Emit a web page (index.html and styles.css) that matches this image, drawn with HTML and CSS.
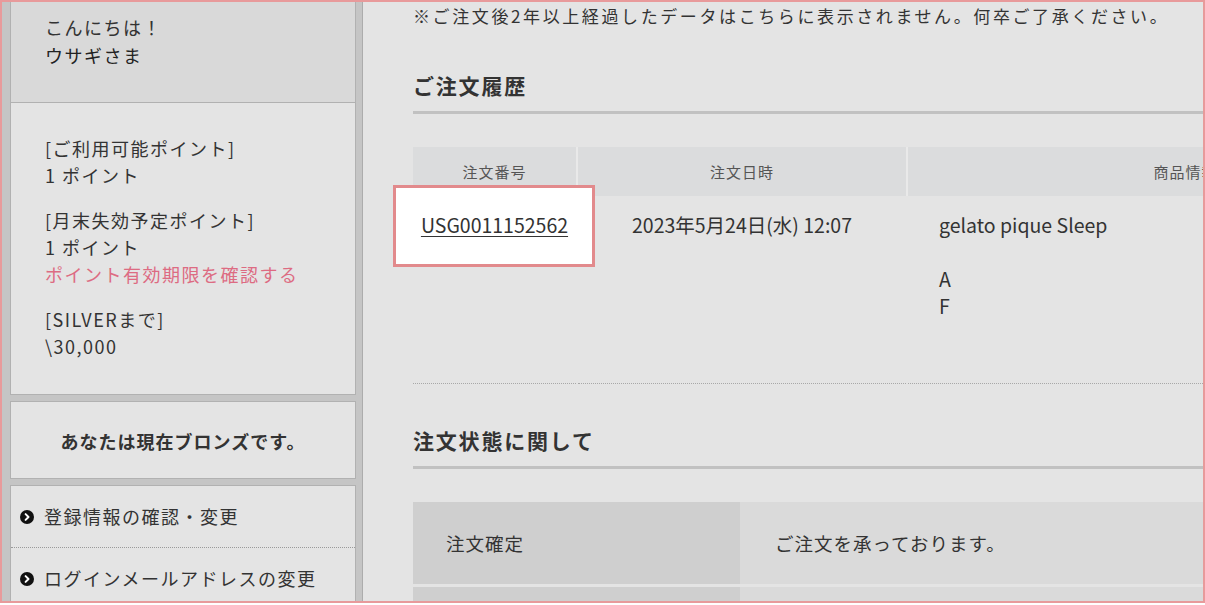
FILE: index.html
```html
<!DOCTYPE html>
<html lang="ja">
<head>
<meta charset="utf-8">
<title>ご注文履歴</title>
<link rel="stylesheet" href="styles.css">
</head>
<body>
<div class="frame">
  <aside class="sidebar">
    <div class="card user">
      <div class="greeting">
        <p>こんにちは！</p>
        <p class="name">ウサギさま</p>
      </div>
      <div class="points">
        <div class="group">
          <p>[ご利用可能ポイント]</p>
          <p>1 ポイント</p>
        </div>
        <div class="group">
          <p>[月末失効予定ポイント]</p>
          <p>1 ポイント</p>
          <p><a class="pink-link" href="#">ポイント有効期限を確認する</a></p>
        </div>
        <div class="group">
          <p>[SILVERまで]</p>
          <p>\30,000</p>
        </div>
      </div>
    </div>
    <div class="card rank">あなたは現在ブロンズです。</div>
    <div class="card menu">
      <ul>
        <li><span class="bullet"><svg viewBox="0 0 14 14" width="14" height="14"><circle cx="7" cy="7" r="7" fill="#111"/><path d="M5.6 4.1 L8.5 7 L5.6 9.9" fill="none" stroke="#fff" stroke-width="2" stroke-linecap="round" stroke-linejoin="round"/></svg></span>登録情報の確認・変更</li>
        <li><span class="bullet"><svg viewBox="0 0 14 14" width="14" height="14"><circle cx="7" cy="7" r="7" fill="#111"/><path d="M5.6 4.1 L8.5 7 L5.6 9.9" fill="none" stroke="#fff" stroke-width="2" stroke-linecap="round" stroke-linejoin="round"/></svg></span>ログインメールアドレスの変更</li>
      </ul>
    </div>
  </aside>
  <main class="main">
    <div class="main-inner">
      <p class="notice">※ご注文後2年以上経過したデータはこちらに表示されません。何卒ご了承ください。</p>
      <h2 class="heading">ご注文履歴</h2>
      <table class="orders">
        <thead>
          <tr>
            <th class="c-no">注文番号</th>
            <th class="c-date">注文日時</th>
            <th class="c-item">商品情報</th>
          </tr>
        </thead>
        <tbody>
          <tr>
            <td class="c-no"><span class="mark"></span><a class="order-link" href="#">USG0011152562</a></td>
            <td class="c-date">2023年5月24日(水) 12:07</td>
            <td class="c-item">gelato pique Sleep<br><br>A<br>F</td>
          </tr>
        </tbody>
      </table>
      <h2 class="heading">注文状態に関して</h2>
      <table class="status">
        <tbody>
          <tr>
            <th>注文確定</th>
            <td>ご注文を承っております。</td>
          </tr>
          <tr>
            <th>&nbsp;</th>
            <td>&nbsp;</td>
          </tr>
        </tbody>
      </table>
    </div>
  </main>
</div>
</body>
</html>
```

FILE: styles.css
```css
* { box-sizing: border-box; }
html, body { margin: 0; padding: 0; background: #fff; }
body {
  font-family: "Noto Sans CJK JP", "Noto Sans", sans-serif;
  color: #333;
  font-size: 18px;
}
p { margin: 0; }

.frame {
  width: 1205px;
  height: 603px;
  border: 2px solid #e89a9b;
  display: flex;
  overflow: hidden;
  background: #e4e4e4;
}

/* sidebar */
.sidebar {
  flex: 0 0 361px;
  background: #c5c5c5;
  padding: 0 6px 0 8px;
  border-right: 1px solid #acacac;
}
.card {
  border: 1px solid #b1b1b1;
  background: #e4e4e4;
  margin-bottom: 6px;
  letter-spacing: 1.5px;
}
.user { border-top: 0; }
.greeting {
  height: 101px;
  background: #d9d9d9;
  border-bottom: 1px solid #b1b1b1;
  padding: 11px 0 0 34px;
  line-height: 28px;
}
.greeting .name { color: #222; }
.points {
  height: 291px;
  padding: 32px 0 0 34px;
  line-height: 27px;
}
.points .group + .group { margin-top: 18px; }
.pink-link { color: #dd6b82; text-decoration: none; }

.rank {
  height: 78px;
  display: flex;
  align-items: center;
  justify-content: center;
  font-weight: bold;
  font-size: 18px;
  letter-spacing: 1px;
  padding-top: 2px;
}

.menu ul { list-style: none; margin: 0; padding: 0; }
.menu li {
  display: flex;
  align-items: center;
  padding: 17px 0 17px 9px;
  line-height: 27px;
}
.menu li + li { border-top: 1px dotted #9a9a9a; }
.bullet { display: flex; margin-right: 10px; }

/* main */
.main {
  flex: 1;
  overflow: hidden;
  padding-left: 50px;
}
.main-inner { width: 1100px; }
.notice {
  line-height: 27px;
  font-size: 17px;
  letter-spacing: 2.6px;
}
.heading {
  margin: 41px 0 0;
  font-size: 21px;
  line-height: 30px;
  letter-spacing: 1.8px;
  font-weight: bold;
  padding-bottom: 11px;
  border-bottom: 3px solid #c1c1c1;
}

.orders {
  margin-top: 33px;
  border-collapse: collapse;
  width: 1050px;
}
.orders th {
  background: #dbdcdd;
  height: 49px;
  font-weight: normal;
  font-size: 15px;
  letter-spacing: 1px;
  color: #555;
  padding: 0;
}
.orders th + th { border-left: 2px solid #e9e9e9; }
.orders td + td { border-left: 2px solid transparent; }
.orders .c-no { width: 164px; text-align: center; }
.orders .c-date { width: 330px; text-align: center; }
.orders .c-item { text-align: center; }
.orders td {
  vertical-align: top;
  padding: 15px 0 64px;
  line-height: 27px;
  font-size: 19.5px;
  border-bottom: 1px dotted #a8a8a8;
}
.orders td.c-item { text-align: left; padding-left: 31px; }
.orders td.c-no { position: relative; }
.mark {
  position: absolute;
  left: -20px;
  top: -11px;
  width: 202px;
  height: 82px;
  border: 3px solid #e28a8c;
  background: #fff;
}
.order-link {
  position: relative;
  color: #333;
  text-decoration: underline;
  text-underline-offset: 3px;
}

.status {
  margin-top: 33px;
  border-collapse: separate;
  border-spacing: 0 3px;
  width: 1050px;
  position: relative;
  top: -3px;
}
.status th, .status td {
  height: 82px;
  text-align: left;
  font-weight: normal;
  vertical-align: middle;
  font-size: 18.5px;
  letter-spacing: 1px;
}
.status th {
  width: 327px;
  background: #cfcfcf;
  padding-left: 33px;
}
.status td {
  background: #dadada;
  padding-left: 35px;
}
```
